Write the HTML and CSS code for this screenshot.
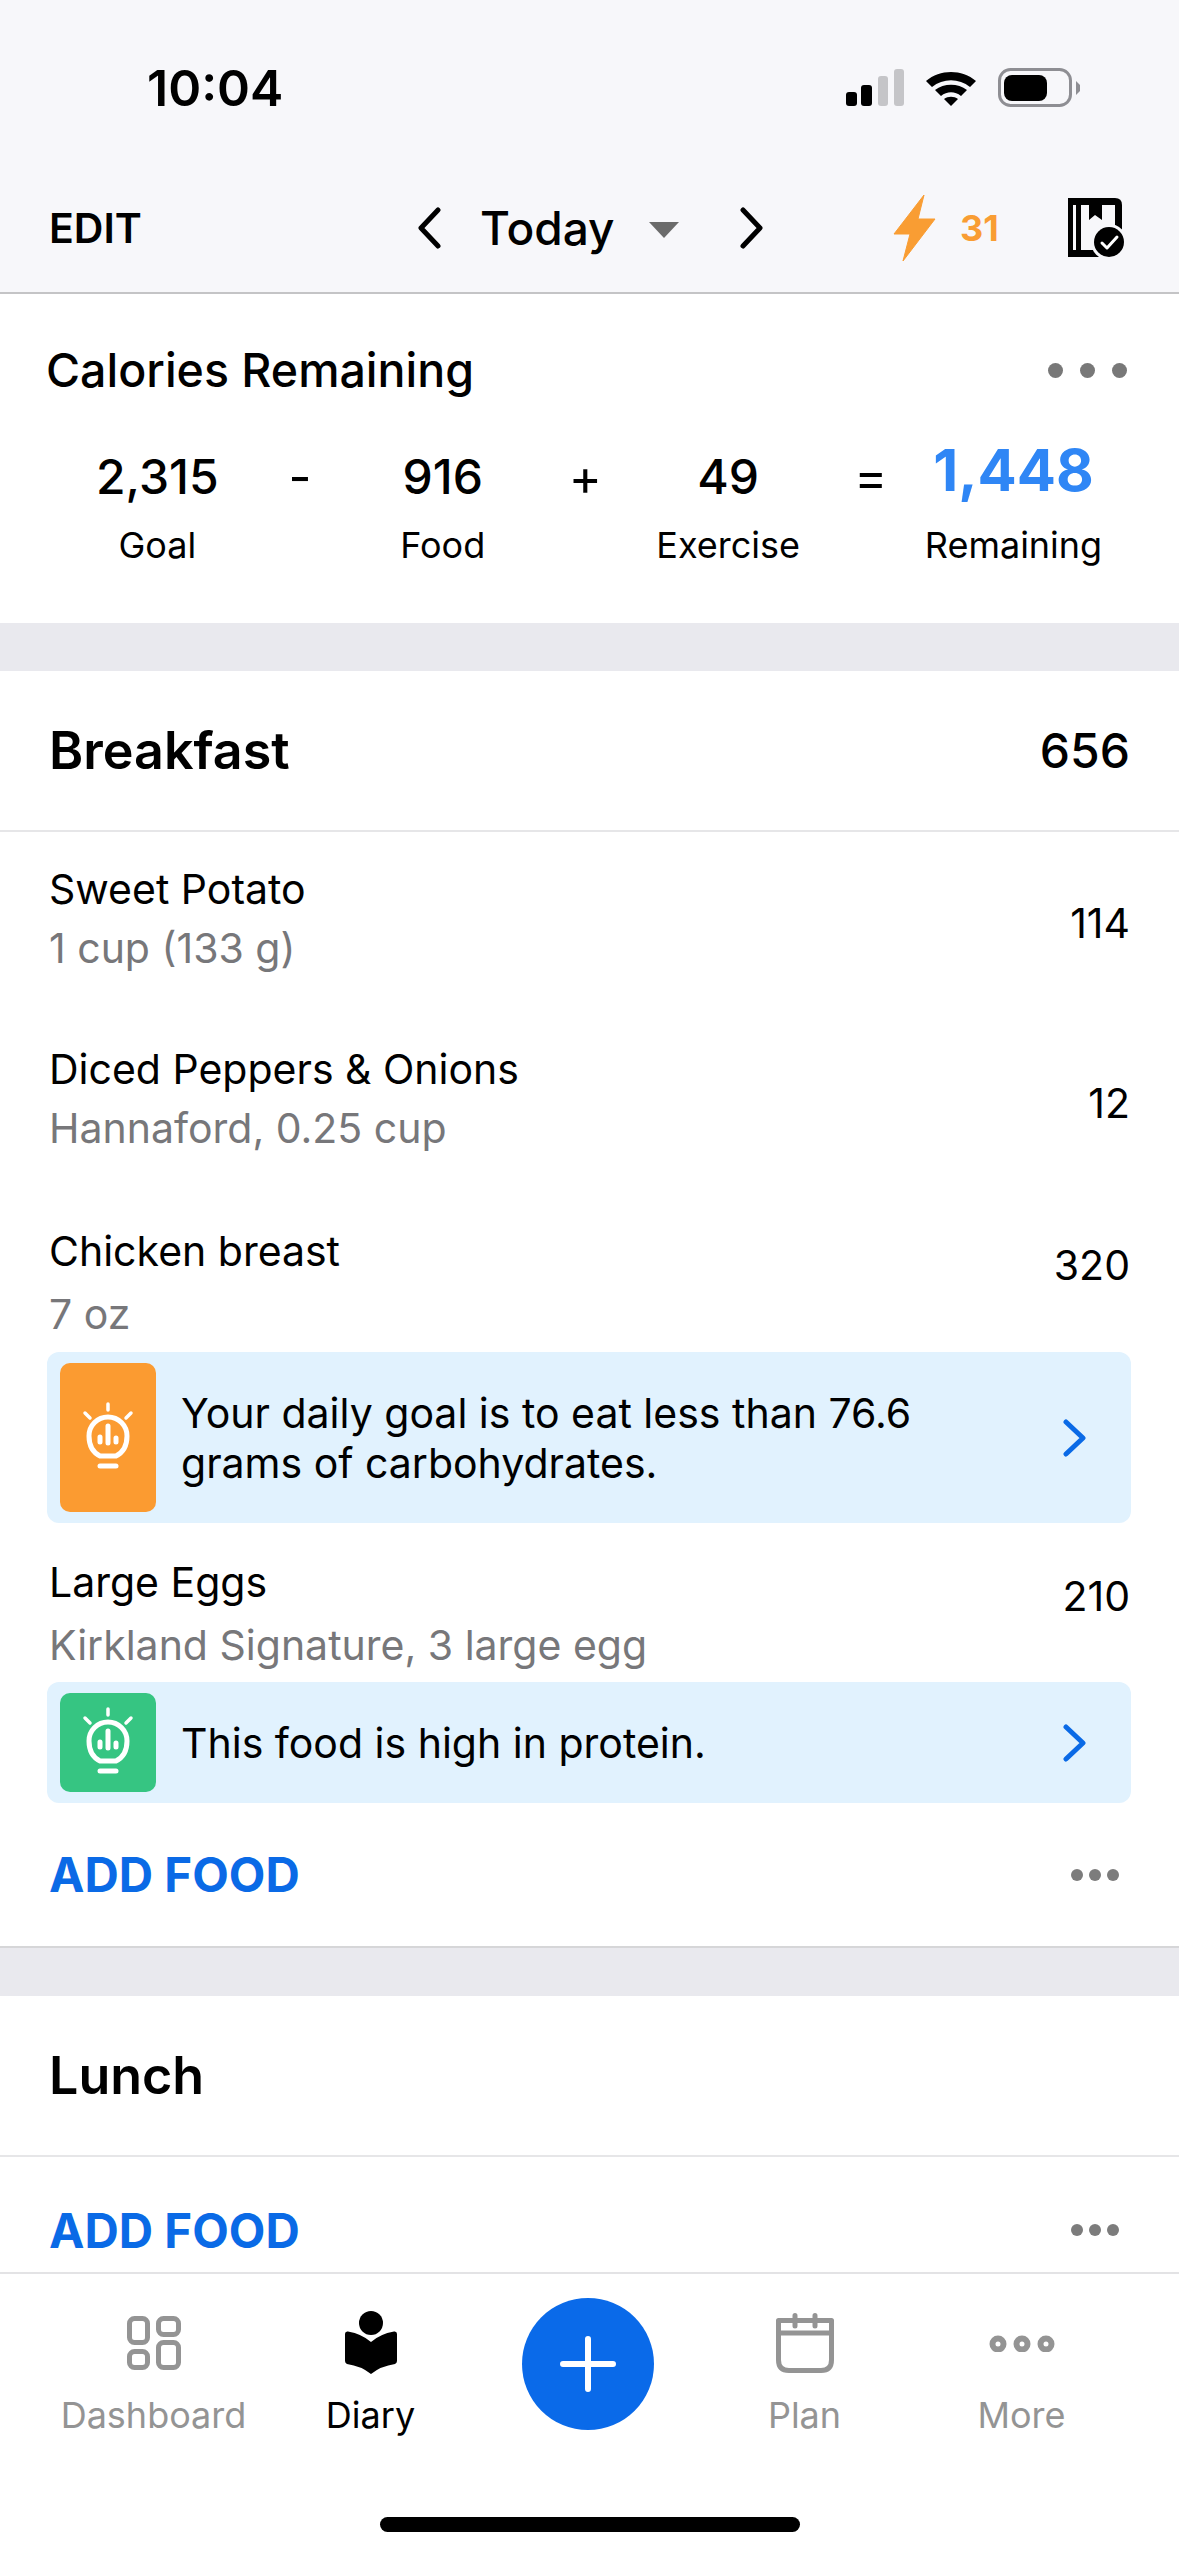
FILE: index.html
```html
<!doctype html>
<html lang="en">
  <head>
    <title>Diary</title>
    <meta charset="UTF-8" />
    <meta name="viewport" content="width=device-width, initial-scale=1" />
    <link rel="stylesheet" href="styles.css">
  </head>

  <body>
    <div class="phone">
      <header class="top">
        <div class="status">
          <span class="time">10:04</span>
          <div class="status-icons">
            <svg class="signal" width="60" height="38" viewBox="0 0 60 38">
              <rect x="2" y="23" width="11" height="14" rx="3" fill="#000" />
              <rect x="17" y="16" width="11" height="21" rx="3" fill="#000" />
              <rect x="34" y="7" width="10" height="30" rx="3" fill="#c5c5c8" />
              <rect x="50" y="0" width="10" height="37" rx="3" fill="#c5c5c8" />
            </svg>
            <svg class="wifi" width="52" height="38" viewBox="0 0 52 38">
              <path d="M1 12 C15 0 37 0 51 12 L45 18 C34 9 18 9 7 18 Z" fill="#000" />
              <path d="M10 21 C19 14 33 14 42 21 L36 27 C30 22 22 22 16 27 Z" fill="#000" />
              <path d="M19 30 C23 27 29 27 33 30 L26 37 Z" fill="#000" />
            </svg>
            <svg class="battery" width="84" height="40" viewBox="0 0 84 40">
              <rect x="1.5" y="1.5" width="71" height="36" rx="11" fill="none" stroke="#8e8e93" stroke-width="3" />
              <rect x="6" y="7" width="43" height="26" rx="8" fill="#000" />
              <path d="M78 13 L82 17 V23 L78 27 Z" fill="#8e8e93" />
            </svg>
          </div>
        </div>
        <nav class="toolbar">
          <span class="edit">EDIT</span>
          <div class="date-nav">
            <svg width="24" height="42" viewBox="0 0 24 42"><path d="M21 3 L4 21 L21 39" class="chev" /></svg>
            <span class="today">Today</span>
            <span class="caret"></span>
            <svg width="24" height="42" viewBox="0 0 24 42"><path d="M3 3 L20 21 L3 39" class="chev" /></svg>
          </div>
          <div class="toolbar-right">
            <svg width="44" height="68" viewBox="0 0 44 68"><path d="M31 1 L1 40 H17 L10 67 L42 25 H25 Z" fill="#f99d33" stroke="#f99d33" stroke-width="1" stroke-linejoin="round" /></svg>
            <span class="streak">31</span>
            <svg class="book" width="60" height="62" viewBox="0 0 60 62">
              <path d="M1 1 H48 Q55 1 55 8 V38 H48 V8 H35 V23 L28 18 L22 23 V8 H14 V53 H32 V60 H1 Z M6 8 V53 H9 V8 Z" fill="#000" fill-rule="evenodd" />
              <circle cx="42" cy="45" r="18" fill="#f7f7fa" />
              <circle cx="42" cy="45" r="15" fill="#000" />
              <path d="M35 46 L40 51 L50 40" fill="none" stroke="#fff" stroke-width="3" stroke-linecap="round" stroke-linejoin="round" />
            </svg>
          </div>
        </nav>
      </header>

      <main class="content">
        <section class="summary">
          <div class="summary-head">
            <h2>Calories Remaining</h2>
            <div class="dots-wide"><i></i><i></i><i></i></div>
          </div>
          <div class="sums">
            <div class="sum"><b>2,315</b><span>Goal</span></div>
            <div class="op">-</div>
            <div class="sum"><b>916</b><span>Food</span></div>
            <div class="op">+</div>
            <div class="sum"><b>49</b><span>Exercise</span></div>
            <div class="op">=</div>
            <div class="sum result"><b>1,448</b><span>Remaining</span></div>
          </div>
        </section>

        <section class="meal">
          <div class="meal-head">
            <h3>Breakfast</h3>
            <span class="meal-total">656</span>
          </div>
          <div class="food first">
            <div><div class="food-name">Sweet Potato</div><div class="food-sub">1 cup (133 g)</div></div>
            <div class="cal">114</div>
          </div>
          <div class="food second">
            <div><div class="food-name">Diced Peppers &amp; Onions</div><div class="food-sub">Hannaford, 0.25 cup</div></div>
            <div class="cal">12</div>
          </div>
          <div class="food third tall">
            <div><div class="food-name">Chicken breast</div><div class="food-sub">7 oz</div></div>
            <div class="cal">320</div>
          </div>
          <div class="tip tip-big">
            <div class="tip-icon orange">
              <svg width="64" height="68" viewBox="-32 -34 64 68"><use href="#bulb" /></svg>
            </div>
            <p>Your daily goal is to eat less than 76.6<br />grams of carbohydrates.</p>
            <svg class="tip-arrow" width="24" height="38" viewBox="0 0 24 38"><path d="M3 3 L20 19 L3 35" /></svg>
          </div>
          <div class="food fourth tall">
            <div><div class="food-name">Large Eggs</div><div class="food-sub">Kirkland Signature, 3 large egg</div></div>
            <div class="cal">210</div>
          </div>
          <div class="tip tip-small">
            <div class="tip-icon green">
              <svg width="64" height="68" viewBox="-32 -34 64 68"><use href="#bulb" /></svg>
            </div>
            <p>This food is high in protein.</p>
            <svg class="tip-arrow" width="24" height="38" viewBox="0 0 24 38"><path d="M3 3 L20 19 L3 35" /></svg>
          </div>
          <div class="add-row">
            <span class="add-food">ADD FOOD</span>
            <div class="dots"><i></i><i></i><i></i></div>
          </div>
        </section>

        <section class="meal meal-lunch">
          <div class="meal-head">
            <h3>Lunch</h3>
          </div>
          <div class="add-row">
            <span class="add-food">ADD FOOD</span>
            <div class="dots"><i></i><i></i><i></i></div>
          </div>
        </section>
      </main>

      <footer class="tabbar">
        <div class="tabs">
          <div class="tab">
            <div class="icon-box">
              <svg width="54" height="54" viewBox="0 0 54 54">
                <g fill="none" stroke="#949494" stroke-width="5">
                  <rect x="2.5" y="2.5" width="18" height="24" rx="5" />
                  <rect x="31.5" y="2.5" width="20" height="16" rx="5" />
                  <rect x="2.5" y="35.5" width="18" height="16" rx="5" />
                  <rect x="31.5" y="26.5" width="20" height="25" rx="5" />
                </g>
              </svg>
            </div>
            <span>Dashboard</span>
          </div>
          <div class="tab active">
            <div class="icon-box">
              <svg width="54" height="64" viewBox="0 0 54 64">
                <circle cx="27" cy="12" r="12" fill="#000" />
                <path d="M1 23 Q1 20 4 20.5 Q18 23 27 31 Q36 23 50 20.5 Q53 20 53 23 V50 Q53 52 51 53 Q37 55 27 63 Q17 55 3 53 Q1 52 1 50 Z" fill="#000" />
              </svg>
            </div>
            <span>Diary</span>
          </div>
          <div class="tab tab-add">
            <div class="plus">
              <svg width="56" height="56" viewBox="0 0 56 56"><path d="M28 3 V53 M3 28 H53" stroke="#fff" stroke-width="6" stroke-linecap="round" /></svg>
            </div>
          </div>
          <div class="tab">
            <div class="icon-box">
              <svg width="58" height="60" viewBox="0 0 58 60">
                <path d="M2.5 7.5 H55.5 V47 Q55.5 57.5 45 57.5 H13 Q2.5 57.5 2.5 47 Z M2.5 20 H55.5" fill="none" stroke="#949494" stroke-width="5" stroke-linejoin="round" />
                <path d="M19 2.5 V13 M39 2.5 V13" stroke="#949494" stroke-width="5" stroke-linecap="round" />
              </svg>
            </div>
            <span>Plan</span>
          </div>
          <div class="tab">
            <div class="icon-box">
              <svg width="66" height="17" viewBox="0 0 66 17">
                <g fill="none" stroke="#949494" stroke-width="6">
                  <circle cx="9" cy="9" r="5.5" />
                  <circle cx="33" cy="9" r="5.5" />
                  <circle cx="57" cy="9" r="5.5" />
                </g>
              </svg>
            </div>
            <span>More</span>
          </div>
        </div>
        <div class="home-bar"></div>
      </footer>
    </div>

    <svg width="0" height="0" class="defs">
      <defs>
        <g id="bulb" fill="none" stroke="#fff" stroke-width="5" stroke-linecap="round" stroke-linejoin="round">
          <path d="M-8 20 C-16 16 -19 8 -19 0 A19 19 0 1 1 19 0 C19 8 16 16 8 20 Z" />
          <path d="M-8 30 H8" />
          <path d="M0 -32 V-26 M-23 -23 L-18 -18 M23 -23 L18 -18" stroke-width="3.5" />
          <path d="M-8 1 V6 M0 -10 V7 M8 2 V6" />
        </g>
      </defs>
    </svg>
  </body>
</html>
```

FILE: styles.css
```css
* {
  box-sizing: border-box;
}

body {
  margin: 0;
  padding: 0;
  background-color: #ffffff;
  font-family: 'Inter', 'Noto Sans', sans-serif;
  color: #000000;
}

.phone {
  display: flex;
  flex-direction: column;
  width: 1179px;
  height: 2556px;
  overflow: hidden;
}

.defs {
  display: none;
}

/* top area */
.top {
  flex: none;
  height: 294px;
  background-color: #f7f7fa;
  border-bottom: 2px solid #c4c4c6;
}

.status {
  display: flex;
  justify-content: space-between;
  align-items: center;
  height: 68px;
  margin-top: 54px;
  padding: 0 97px 0 147px;
}

.time {
  font-size: 50px;
  font-weight: 600;
}

.status-icons {
  display: flex;
  align-items: center;
  gap: 21px;
}

.toolbar {
  display: flex;
  align-items: center;
  height: 100px;
  margin-top: 56px;
  padding-left: 49px;
}

.edit {
  width: 368px;
  font-size: 41px;
  font-weight: 600;
}

.date-nav {
  display: flex;
  flex: none;
  align-items: center;
  width: 476px;
}

.chev {
  fill: none;
  stroke: #000000;
  stroke-width: 5;
  stroke-linecap: round;
  stroke-linejoin: round;
}

.today {
  margin-left: 39px;
  font-size: 46px;
  font-weight: 500;
}

.caret {
  width: 0;
  height: 0;
  margin: 4px 61px 0 34px;
  border-left: 15px solid transparent;
  border-right: 15px solid transparent;
  border-top: 16px solid #6b6b6b;
}

.toolbar-right {
  display: flex;
  align-items: center;
}

.streak {
  margin-left: 23px;
  font-size: 36px;
  font-weight: 700;
  color: #f99d33;
}

.book {
  margin-left: 68px;
}

/* scrolling content */
.content {
  flex: 1;
  min-height: 0;
  overflow: hidden;
  background-color: #e9e9ee;
}

.summary {
  height: 329px;
  padding-top: 46px;
  background-color: #ffffff;
}

.summary-head {
  display: flex;
  justify-content: space-between;
  align-items: center;
  height: 60px;
  padding: 0 52px 0 46px;
}

.summary-head h2 {
  margin: 0;
  font-size: 46.5px;
  font-weight: 500;
}

.dots-wide {
  display: flex;
  gap: 17px;
}

.dots-wide i {
  width: 15px;
  height: 15px;
  border-radius: 50%;
  background-color: #787878;
}

.sums {
  display: grid;
  grid-template-columns: repeat(7, 142.7px);
  margin-top: 46px;
  padding-left: 86px;
}

.sum {
  display: flex;
  flex-direction: column;
  align-items: center;
}

.sum b {
  height: 62px;
  font-size: 48px;
  line-height: 62px;
  font-weight: 500;
}

.sum span {
  margin-top: 13px;
  font-size: 36px;
  line-height: 48px;
  white-space: nowrap;
}

.result b {
  font-size: 58px;
  font-weight: 700;
  line-height: 48px;
  color: #2f86f5;
}

.op {
  height: 62px;
  text-align: center;
  font-size: 50px;
  line-height: 62px;
}

.meal {
  margin-top: 48px;
  background-color: #ffffff;
  border-bottom: 2px solid #d6d6d8;
}

.meal-head {
  display: flex;
  justify-content: space-between;
  align-items: center;
  height: 161px;
  padding: 0 49px 0 49px;
  border-bottom: 2px solid #e6e6e8;
}

.meal-head h3 {
  margin: 0;
  font-size: 52px;
  font-weight: 600;
}

.meal-total {
  font-size: 48px;
  font-weight: 500;
}

.food {
  display: flex;
  justify-content: space-between;
  padding: 0 49px;
}

.food.first {
  margin-top: 28px;
}

.food.second {
  margin-top: 63px;
}

.food.third {
  margin-top: 65px;
}

.food.fourth {
  margin-top: 30px;
}

.food-name {
  font-size: 41px;
  line-height: 58px;
}

.food-sub {
  margin-top: 1px;
  font-size: 41px;
  line-height: 58px;
  color: #77777a;
}

.tall .food-sub {
  margin-top: 5px;
}

.cal {
  margin-top: 34px;
  font-size: 41px;
  line-height: 58px;
}

.tall .cal {
  margin-top: 14px;
}

.tip {
  display: flex;
  align-items: center;
  margin: 0 48px 0 47px;
  padding: 0 44px 0 13px;
  background-color: #e1f2fe;
  border-radius: 12px;
}

.tip-big {
  height: 171px;
  margin-top: 9px;
}

.tip-small {
  height: 121px;
  margin-top: 8px;
}

.tip-icon {
  display: flex;
  flex: none;
  justify-content: center;
  align-items: center;
  width: 96px;
  padding-bottom: 4px;
  border-radius: 10px;
}

.tip-big .tip-icon {
  height: 149px;
}

.tip-small .tip-icon {
  height: 99px;
}

.orange {
  background-color: #fb9b31;
}

.green {
  background-color: #36c582;
}

.tip p {
  flex: 1;
  margin: 0 0 0 25px;
  font-size: 41px;
  line-height: 50px;
}

.tip-arrow {
  flex: none;
  fill: none;
  stroke: #0a6ae6;
  stroke-width: 5;
  stroke-linecap: round;
  stroke-linejoin: round;
}

.add-row {
  display: flex;
  justify-content: space-between;
  align-items: center;
  height: 143px;
  padding: 0 60px 0 49px;
}

.add-food {
  font-size: 47.5px;
  font-weight: 700;
  color: #0a6ae6;
}

.dots {
  display: flex;
  gap: 6px;
}

.dots i {
  width: 12px;
  height: 12px;
  border-radius: 50%;
  background-color: #7c7c7c;
}

.meal-lunch .add-row {
  height: 146px;
}

/* bottom tabs */
.tabbar {
  flex: none;
  height: 284px;
  background-color: #ffffff;
  border-top: 2px solid #e3e3e5;
}

.tabs {
  display: grid;
  grid-template-columns: repeat(5, 217px);
  padding-left: 45px;
}

.tab {
  display: flex;
  flex-direction: column;
  align-items: center;
  height: 166px;
  padding-top: 31px;
  font-size: 36px;
  line-height: 46px;
  color: #949494;
}

.tab.active {
  color: #000000;
}

.icon-box {
  display: flex;
  align-items: center;
  height: 76px;
  margin-bottom: 11px;
}

.tab-add {
  padding-top: 24px;
}

.plus {
  display: flex;
  justify-content: center;
  align-items: center;
  width: 132px;
  height: 132px;
  border-radius: 50%;
  background-color: #0a6ae9;
}

.home-bar {
  width: 420px;
  height: 15px;
  margin: 77px auto 0 auto;
  border-radius: 8px;
  background-color: #000000;
}
```
